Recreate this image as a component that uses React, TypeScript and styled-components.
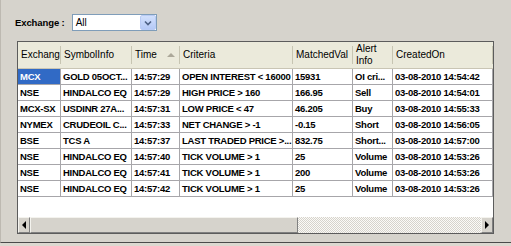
import styled, { createGlobalStyle } from 'styled-components';

const GlobalStyle = createGlobalStyle`
  html, body { margin: 0; padding: 0; background: #dcd8d0; }
  body { font-family: "Liberation Sans", Arial, sans-serif; }
`;

const Panel = styled.div`
  width: 511px;
  height: 243px;
  box-sizing: border-box;
  background: #d6d3cc;
  border-left: 1px solid #bdb9b1;
  border-bottom: 1px solid #4a4a4a;
  display: flex;
  flex-direction: column;
`;

const Toolbar = styled.div`
  display: flex;
  align-items: center;
  gap: 7px;
  padding: 14px 0 0 14px;
  height: 17px;
`;

const Label = styled.span`
  font-weight: bold;
  font-size: 9.5px;
  letter-spacing: -0.1px;
  color: #000;
`;

const Combo = styled.div`
  width: 85px;
  height: 17px;
  box-sizing: border-box;
  border: 1px solid #7f9db9;
  background: #fff;
  display: flex;
  align-items: center;
`;

const ComboText = styled.span`
  flex: 1;
  padding-left: 3px;
  font-size: 10px;
  color: #000;
`;

const ComboButton = styled.div`
  width: 16px;
  height: 15px;
  box-sizing: border-box;
  border: 1px solid #b9cbf5;
  border-radius: 2px;
  background: linear-gradient(#d2e0fc, #b5c9f7);
  display: flex;
  align-items: center;
  justify-content: center;
`;

const Frame = styled.div`
  margin: 10px 0 0 16px;
  width: 477px;
  height: 193px;
  box-sizing: border-box;
  border: 1px solid #5c5c5c;
  background: #fff;
  display: flex;
  flex-direction: column;
`;

const cols = '43px 71px 48px 113px 60px 40px 100px';

const HeaderRow = styled.div`
  display: grid;
  grid-template-columns: ${cols};
  height: 27px;
  box-sizing: border-box;
  background: #ebeadb;
  border-bottom: 1px solid #c9c5b4;
`;

const HeaderCell = styled.div`
  position: relative;
  display: flex;
  align-items: center;
  padding-left: 3px;
  font-size: 10px;
  line-height: 12px;
  color: #000;
  white-space: pre;
  overflow: hidden;
  &::after {
    content: '';
    position: absolute;
    right: 0;
    top: 4px;
    bottom: 4px;
    width: 1px;
    background: #c7c5b2;
  }
`;

const SortArrow = styled.span`
  position: absolute;
  right: 5px;
  top: 11px;
  width: 0;
  height: 0;
  border-left: 4px solid transparent;
  border-right: 4px solid transparent;
  border-bottom: 4px solid #aca899;
`;

const Body = styled.div`
  flex: 1;
  display: flex;
  flex-direction: column;
`;

const Row = styled.div`
  display: grid;
  grid-template-columns: ${cols};
  height: 16px;
`;

const Cell = styled.div<{ $selected?: boolean }>`
  box-sizing: border-box;
  border-right: 1px solid #a7a6aa;
  border-bottom: 1px solid #a7a6aa;
  padding-left: 2px;
  font-weight: bold;
  font-size: 9.5px;
  letter-spacing: -0.25px;
  line-height: 15px;
  white-space: nowrap;
  overflow: hidden;
  color: ${p => (p.$selected ? '#fff' : '#000')};
  background: ${p => (p.$selected ? '#316ac5' : 'transparent')};
`;

const ScrollBar = styled.div`
  height: 16px;
  display: flex;
  background-color: #f4f3ee;
  background-image: repeating-conic-gradient(#d6d3cc 0 25%, #fbfaf7 0 50%);
  background-size: 2px 2px;
`;

const ScrollButton = styled.div`
  width: 12px;
  box-sizing: border-box;
  background: #d6d3cc;
  border-top: 1px solid #f4f3ee;
  border-left: 1px solid #f4f3ee;
  border-right: 1px solid #808080;
  border-bottom: 1px solid #808080;
  display: flex;
  align-items: center;
  justify-content: center;
`;

const Thumb = styled(ScrollButton)`
  width: 268px;
`;

const Arrow = styled.span<{ $dir: 'left' | 'right' }>`
  width: 0;
  height: 0;
  border-top: 4px solid transparent;
  border-bottom: 4px solid transparent;
  ${p => (p.$dir === 'left' ? 'border-right: 4px solid #000;' : 'border-left: 4px solid #000;')}
`;

const Track = styled.div`
  flex: 1;
`;

const headers = ['Exchang', 'SymbolInfo', 'Time', 'Criteria', 'MatchedVal', 'Alert\nInfo', 'CreatedOn'];

const rows = [
  ['MCX', 'GOLD 05OCT...', '14:57:29', 'OPEN INTEREST < 16000', '15931', 'OI cri...', '03-08-2010 14:54:42'],
  ['NSE', 'HINDALCO EQ', '14:57:29', 'HIGH PRICE > 160', '166.95', 'Sell', '03-08-2010 14:54:01'],
  ['MCX-SX', 'USDINR 27A...', '14:57:31', 'LOW PRICE < 47', '46.205', 'Buy', '03-08-2010 14:55:33'],
  ['NYMEX', 'CRUDEOIL C...', '14:57:33', 'NET CHANGE > -1', '-0.15', 'Short', '03-08-2010 14:56:05'],
  ['BSE', 'TCS A', '14:57:37', 'LAST TRADED PRICE >...', '832.75', 'Short...', '03-08-2010 14:57:00'],
  ['NSE', 'HINDALCO EQ', '14:57:40', 'TICK VOLUME > 1', '25', 'Volume', '03-08-2010 14:53:26'],
  ['NSE', 'HINDALCO EQ', '14:57:41', 'TICK VOLUME > 1', '200', 'Volume', '03-08-2010 14:53:26'],
  ['NSE', 'HINDALCO EQ', '14:57:42', 'TICK VOLUME > 1', '25', 'Volume', '03-08-2010 14:53:26'],
];

export default function App() {
  return (
    <>
      <GlobalStyle />
      <Panel>
        <Toolbar>
          <Label>Exchange :</Label>
          <Combo>
            <ComboText>All</ComboText>
            <ComboButton>
              <svg width="8" height="6" viewBox="0 0 8 6">
                <path d="M1 1.5 L4 4.5 L7 1.5" fill="none" stroke="#4d6185" strokeWidth="1.6" />
              </svg>
            </ComboButton>
          </Combo>
        </Toolbar>
        <Frame>
          <HeaderRow>
            {headers.map(h => (
              <HeaderCell key={h}>
                {h}
                {h === 'Time' && <SortArrow />}
              </HeaderCell>
            ))}
          </HeaderRow>
          <Body>
            {rows.map((r, i) => (
              <Row key={i}>
                {r.map((c, j) => (
                  <Cell key={j} $selected={i === 0 && j === 0}>{c}</Cell>
                ))}
              </Row>
            ))}
          </Body>
          <ScrollBar>
            <ScrollButton><Arrow $dir="left" /></ScrollButton>
            <Thumb />
            <Track />
            <ScrollButton><Arrow $dir="right" /></ScrollButton>
          </ScrollBar>
        </Frame>
      </Panel>
    </>
  );
}
